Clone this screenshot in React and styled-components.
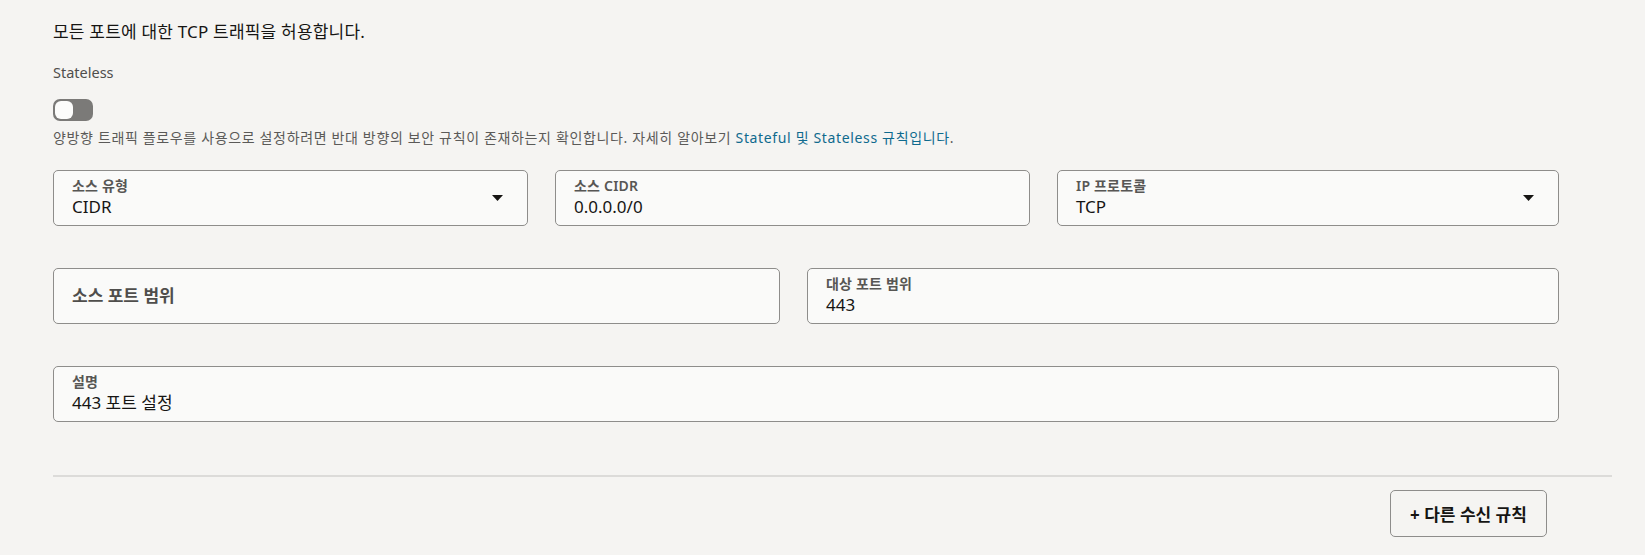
import React from 'react';
import styled, { createGlobalStyle } from 'styled-components';

const GlobalStyle = createGlobalStyle`
  body {
    margin: 0;
    background: #f5f4f2;
    font-family: "Noto Sans", "Noto Sans CJK KR", sans-serif;
    color: #161513;
  }
`;

const StyledPage = styled.div`
  padding: 20px 33px 20px 53px;
`;

const StyledTitle = styled.div`
  font-size: 17px;
  letter-spacing: 0.2px;
  line-height: 24px;
`;

const StyledSwitchLabel = styled.div`
  color: #4f4e4c;
  font-size: 14.5px;
  line-height: 20px;
  margin-top: 18px;
`;

const StyledSwitch = styled.div`
  background: #7b7a78;
  border-radius: 7px;
  box-sizing: border-box;
  height: 22px;
  margin-top: 17px;
  padding: 2px;
  width: 40px;
`;

const StyledKnob = styled.div`
  background: #fcfcfb;
  border-radius: 6px;
  height: 18px;
  width: 18px;
`;

const StyledHelp = styled.div`
  color: #5b5a58;
  font-size: 14px;
  letter-spacing: 0.65px;
  line-height: 18px;
  margin-top: 8px;
`;

const StyledLink = styled.a`
  color: #0f6a8e;
  text-decoration: none;
`;

const StyledForm = styled.div`
  display: flex;
  flex-direction: column;
  gap: 42px;
  margin-top: 23px;
  width: 1506px;
`;

const StyledRow = styled.div`
  display: grid;
  gap: 27px;
  grid-template-columns: ${({ columns }) => columns};
`;

const StyledField = styled.div`
  align-items: center;
  background: #fafaf9;
  border: 1px solid #8e8d8b;
  border-radius: 5px;
  box-sizing: border-box;
  display: flex;
  height: 56px;
  padding: 0 24px 0 18px;
`;

const StyledFieldBody = styled.div`
  display: flex;
  flex: 1;
  flex-direction: column;
`;

const StyledLabel = styled.div`
  color: #575654;
  font-size: 14px;
  font-weight: 600;
  letter-spacing: 0.2px;
  line-height: 18px;
`;

const StyledEmptyLabel = styled.div`
  color: #4f4e4c;
  font-size: 17px;
  font-weight: 600;
  line-height: 22px;
`;

const StyledValue = styled.div`
  font-size: 17px;
  line-height: 24px;
`;

const StyledDivider = styled.div`
  background: #dcdbd9;
  height: 2px;
  margin-top: 53px;
`;

const StyledFooter = styled.div`
  display: flex;
  justify-content: flex-end;
  margin-top: 13px;
  padding-right: 65px;
`;

const StyledButton = styled.button`
  background: transparent;
  border: 1px solid #8e8d8b;
  border-radius: 5px;
  color: #161513;
  cursor: pointer;
  font-family: inherit;
  font-size: 17px;
  font-weight: 700;
  height: 47px;
  width: 157px;
`;

const Caret = () => (
  <svg width="11" height="6" viewBox="0 0 11 6">
    <path d="M0 0h11L5.5 6z" fill="#161513" />
  </svg>
);

const Field = ({ label, value, select }) => (
  <StyledField>
    <StyledFieldBody>
      {value === undefined ? (
        <StyledEmptyLabel>{label}</StyledEmptyLabel>
      ) : (
        <>
          <StyledLabel>{label}</StyledLabel>
          <StyledValue>{value}</StyledValue>
        </>
      )}
    </StyledFieldBody>
    {select && <Caret />}
  </StyledField>
);

const App = () => (
  <StyledPage>
    <GlobalStyle />
    <StyledTitle>모든 포트에 대한 TCP 트래픽을 허용합니다.</StyledTitle>
    <StyledSwitchLabel>Stateless</StyledSwitchLabel>
    <StyledSwitch>
      <StyledKnob />
    </StyledSwitch>
    <StyledHelp>
      양방향 트래픽 플로우를 사용으로 설정하려면 반대 방향의 보안 규칙이 존재하는지 확인합니다. 자세히 알아보기{' '}
      <StyledLink href="#">Stateful 및 Stateless 규칙입니다</StyledLink>.
    </StyledHelp>

    <StyledForm>
      <StyledRow columns="475px 475px 1fr">
        <Field label="소스 유형" value="CIDR" select />
        <Field label="소스 CIDR" value="0.0.0.0/0" />
        <Field label="IP 프로토콜" value="TCP" select />
      </StyledRow>
      <StyledRow columns="727px 1fr">
        <Field label="소스 포트 범위" />
        <Field label="대상 포트 범위" value="443" />
      </StyledRow>
      <StyledRow columns="1fr">
        <Field label="설명" value="443 포트 설정" />
      </StyledRow>
    </StyledForm>

    <StyledDivider />
    <StyledFooter>
      <StyledButton>+ 다른 수신 규칙</StyledButton>
    </StyledFooter>
  </StyledPage>
);

export default App;
